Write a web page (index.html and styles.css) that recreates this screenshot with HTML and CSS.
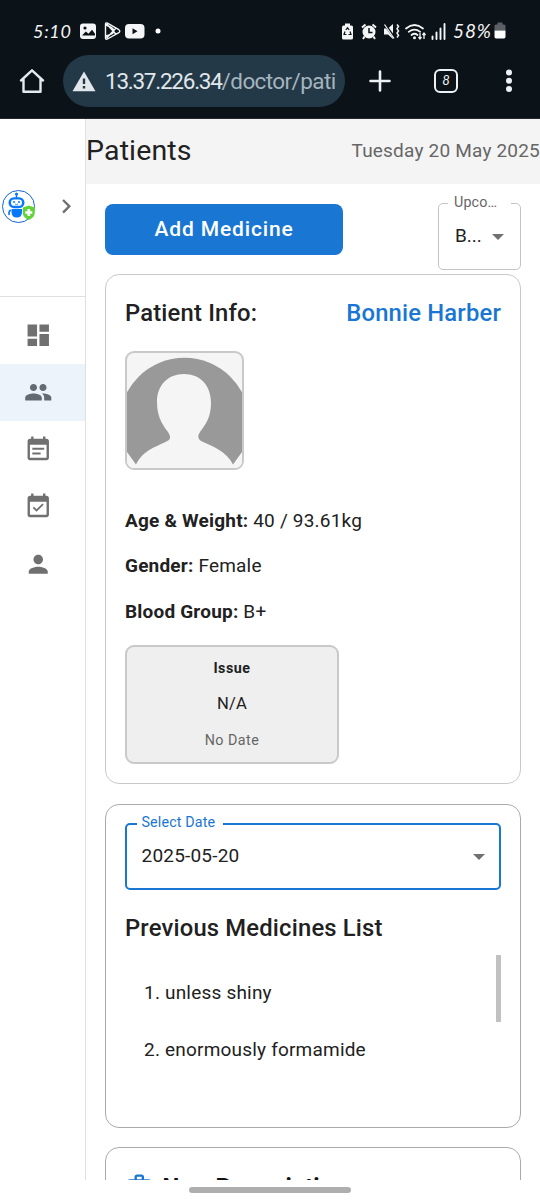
FILE: index.html
```html
<!DOCTYPE html>
<html lang="en">
<head>
<meta charset="utf-8">
<title>Patients</title>
<link rel="stylesheet" href="styles.css">
</head>
<body>
<div class="phone">
  <div class="browser">
    <div class="status">
      <span class="time">5:10</span>
      <svg class="status-left" width="86" height="20" viewBox="0 0 86 20">
        <rect x="0" y="2.500" width="16" height="15.500" rx="3" fill="#f3f5f6"/>
        <circle cx="5" cy="7" r="1.600" fill="#0b1218"/>
        <path d="M2 14.500l3.800-4 2.700 2.300 3.500-4 3 4v1.700z" fill="#0b1218"/>
        <path d="M25.500 3.200v13.600q0 2.300 2 1.200l11.300-6.300q2-1.500 0-3L27.500 2.200q-2-1-2 1zM26.500 2.800l9.500 10.500M26.500 17.300L36 7M26 15q8-2 8-5t-8-6" fill="none" stroke="#f3f5f6" stroke-width="1.400"/>
        <rect x="45" y="3" width="19.500" height="14.500" rx="4" fill="#f3f5f6"/>
        <path d="M52.500 7.200v6l5-3z" fill="#0b1218"/>
        <circle cx="78" cy="10" r="2.500" fill="#fff"/>
      </svg>
      <svg class="status-right" width="108" height="20" viewBox="0 0 108 20">
        <path d="M4 2.500h5v2h1.500q1.500 0 1.500 1.500v11q0 1.500-1.500 1.500h-8Q1 18.500 1 17V6q0-1.500 1.500-1.500H4z" fill="#f3f5f6"/>
        <path d="M4.800 9l1.700-2.200L8.200 9M9 10.500l1 3H7.500M5.500 13.500H3l1-3" fill="none" stroke="#0b1218" stroke-width="1.200"/>
        <circle cx="28" cy="11" r="6.500" fill="#f3f5f6"/>
        <path d="M21 6.500l3.500-3M31.500 3.500l3.500 3M23.500 15.500l-1.500 2.500M32.500 15.500l1.500 2.500" stroke="#f3f5f6" stroke-width="2"/>
        <path d="M28 7v4.500H31.500" fill="none" stroke="#0b1218" stroke-width="1.500"/>
        <path d="M43 7.500h4L52 3v15l-5-4.500h-4z" fill="#f3f5f6"/>
        <path d="M43.500 3L54 17.500" stroke="#0b1218" stroke-width="2.600"/>
        <path d="M43.500 3.500L53 17.500" stroke="#f3f5f6" stroke-width="1.300"/>
        <path d="M56 3.500l1.500 2-1.500 2.200 1.500 2.200-1.500 2.200 1.500 2.200-1.500 2.200" fill="none" stroke="#f3f5f6" stroke-width="1.500"/>
        <path d="M65 7.500Q73.500.5 82 7.500M67.700 10.800q5.800-4.500 11.500 0M70.500 14q3-2.500 6 0" fill="none" stroke="#f3f5f6" stroke-width="1.700" stroke-linecap="round"/>
        <circle cx="73.500" cy="16.800" r="1.500" fill="#f3f5f6"/>
        <path d="M79 12v6M77.500 16l1.500 2 1.500-2M83 18v-6M81.500 14l1.500-2 1.500 2" fill="none" stroke="#f3f5f6" stroke-width="1.300"/>
        <path d="M91.500 15.500v2.500M95.500 11.500V18M99.500 7.500V18M103.500 3V18" stroke="#f3f5f6" stroke-width="1.900" stroke-linecap="round"/>
      </svg>
      <span class="percent">58%</span>
      <svg class="battery" width="12" height="18" viewBox="0 0 12 18">
        <path d="M3.500 0.500h5v2h1.500q1.500 0 1.500 1.500v4.500H.5V4Q.5 2.500 2 2.500h1.500z" fill="#5c5f65"/>
        <path d="M.5 8.500h11v6q0 2-1.500 2H2q-1.500 0-1.500-2z" fill="#fff"/>
      </svg>
    </div>
    <div class="toolbar">
      <svg class="home" width="26" height="26" viewBox="0 0 26 26"><path d="M2 12.500L13 2.300l11 10.200M4.500 11v12.700h17V11" fill="none" stroke="#e6eaed" stroke-width="2.400" stroke-linejoin="round" stroke-linecap="round"/></svg>
      <div class="address">
        <svg width="24" height="21" viewBox="0 0 24 21"><path d="M12 0.500L23.500 20.300H.5z" fill="#e1e7eb"/><path d="M12 7.500v5.500M12 15v2.600" stroke="#233947" stroke-width="2.400"/></svg>
        <span class="url"><span class="host">13.37.226.34</span>/doctor/pati</span>
      </div>
      <svg class="plus" width="22" height="22" viewBox="0 0 22 22"><path d="M11 1.500v19M1.500 11h19" stroke="#eef1f3" stroke-width="2.600" stroke-linecap="round"/></svg>
      <span class="tabs">8</span>
      <svg class="dots" width="8" height="24" viewBox="0 0 8 24" fill="#eef1f3"><circle cx="4" cy="3.500" r="3"/><circle cx="4" cy="11.800" r="3"/><circle cx="4" cy="20" r="3"/></svg>
    </div>
  </div>

  <div class="app">
    <nav class="sidebar">
      <div class="brand">
        <svg class="logo" width="35" height="35" viewBox="0 0 35 35">
          <circle cx="16.500" cy="17.500" r="16" fill="#fff" stroke="#1464d8" stroke-width="1"/>
          <path d="M14.500 5v4" stroke="#0878f8" stroke-width="1.500"/><circle cx="14.500" cy="5" r="1.500" fill="#0878f8"/>
          <rect x="6.500" y="8.200" width="16" height="11" rx="5.500" fill="#0878f8"/>
          <rect x="9" y="10.500" width="11" height="6.300" rx="3.100" fill="#fff"/>
          <circle cx="12" cy="13" r="1" fill="#0878f8"/><circle cx="17" cy="13" r="1" fill="#0878f8"/>
          <path d="M13 15q1.500 1 3 0" stroke="#0878f8" stroke-width=".8" fill="none"/>
          <path d="M9.500 20h10.500v3q0 5.500-5.200 5.500T9.500 23z" fill="#0878f8"/>
          <path d="M8.700 21q-2.500 1.500-1.500 5" fill="none" stroke="#0878f8" stroke-width="1.600"/>
          <path d="M26.800 16.500l6 2v5q0 5-6 7.500-6-2.500-6-7.500v-5z" fill="#62d33a"/>
          <path d="M26.800 20v7M23.300 23.500h7" stroke="#fff" stroke-width="2.700"/>
        </svg>
        <svg class="chevron" width="28.500" height="28.500" viewBox="0 0 24 24"><path d="M10 6L8.590 7.410 13.170 12l-4.580 4.590L10 18l6-6z" fill="#707070"/></svg>
      </div>
      <div class="nav-item"><svg viewBox="0 0 24 24"><path d="M3 13h8V3H3v10zm0 8h8v-6H3v6zm10 0h8V11h-8v10zm0-18v6h8V3h-8z"/></svg></div>
      <div class="nav-item active"><svg viewBox="0 0 24 24"><path d="M16 11c1.660 0 2.990-1.340 2.990-3S17.660 5 16 5s-3 1.340-3 3 1.340 3 3 3zm-8 0c1.660 0 2.990-1.340 2.990-3S9.660 5 8 5 5 6.340 5 8s1.340 3 3 3zm0 2c-2.330 0-7 1.170-7 3.500V19h14v-2.500c0-2.330-4.670-3.500-7-3.500zm8 0c-.29 0-.62.020-.97.050 1.160.84 1.970 1.970 1.970 3.450V19h6v-2.500c0-2.330-4.670-3.500-7-3.500z"/></svg></div>
      <div class="nav-item calendar"><svg viewBox="0 0 24 24"><path d="M19 4h-1V2h-2v2H8V2H6v2H5c-1.110 0-1.990.9-1.990 2L3 20c0 1.100.89 2 2 2h14c1.100 0 2-.9 2-2V6c0-1.100-.9-2-2-2zm0 16H5V9h14v11zM17 11.500H7v1.700h10v-1.700zm-3 4H7v1.700h7v-1.700z"/></svg></div>
      <div class="nav-item calendar"><svg viewBox="0 0 24 24"><path d="M19 4h-1V2h-2v2H8V2H6v2H5c-1.110 0-1.990.9-1.990 2L3 20c0 1.100.89 2 2 2h14c1.100 0 2-.9 2-2V6c0-1.100-.9-2-2-2zm0 16H5V9h14v11zM10.560 17.500l6-6-1.060-1.060-4.940 4.940-2.120-2.120-1.060 1.060z"/></svg></div>
      <div class="nav-item"><svg viewBox="0 0 24 24"><path d="M12 12c2.210 0 4-1.790 4-4s-1.790-4-4-4-4 1.790-4 4 1.790 4 4 4zm0 2c-2.670 0-8 1.340-8 4v2h16v-2c0-2.660-5.330-4-8-4z"/></svg></div>
    </nav>

    <main class="content">
      <header class="page-header"><h1>Patients</h1><span class="today">Tuesday 20 May 2025</span></header>
      <div class="actions">
        <button class="add">Add Medicine</button>
        <fieldset class="select upcoming"><legend>Upco…</legend><span>B...</span><i class="arrow"></i></fieldset>
      </div>

      <section class="card patient">
        <div class="card-title"><span>Patient Info:</span><span class="name">Bonnie Harber</span></div>
        <svg class="avatar" viewBox="0 0 115 115">
          <circle cx="57.500" cy="70" r="65.200" fill="#999"/>
          <path d="M9 111.500C17 96 30 94 42 87Q44.500 84 41 79C34 70 30 62 30 49C30 32 41 21 57 21S84 32 84 50C84 64 79 71 73 79Q69 85 74 88C87 94 99 98 106 111.500L108 115H7z" fill="#f5f5f5"/>
          <path d="M0 99l9 12.500 2 3.500H0zM115 99l-9 12.500-2 3.500h11z" fill="#f5f5f5"/>
        </svg>
        <p class="fact"><b>Age &amp; Weight:</b> 40 / 93.61kg</p>
        <p class="fact"><b>Gender:</b> Female</p>
        <p class="fact"><b>Blood Group:</b> B+</p>
        <div class="issue"><b>Issue</b><span class="value">N/A</span><span class="date">No Date</span></div>
      </section>

      <section class="card medicines">
        <fieldset class="select date-select"><legend>Select Date</legend><span>2025-05-20</span><i class="arrow"></i></fieldset>
        <h2>Previous Medicines List</h2>
        <div class="list">
          <div class="items"><p>1. unless shiny</p><p>2. enormously formamide</p></div>
          <div class="thumb"></div>
        </div>
      </section>

      <section class="card prescription">
        <svg width="28.500" height="28.500" viewBox="0 0 24 24" fill="#1976d2"><path d="M20 6h-4V4c0-1.110-.89-2-2-2h-4c-1.110 0-2 .89-2 2v2H4c-1.110 0-2 .89-2 2v12c0 1.110.89 2 2 2h16c1.110 0 2-.89 2-2V8c0-1.110-.89-2-2-2zM10 4h4v2h-4V4zm10 16H4V8h16v12z"/><path d="M11 10h2v3h3v2h-3v3h-2v-3H8v-2h3z"/></svg>
        <span>New Prescription</span>
      </section>
    </main>
  </div>
  <div class="gesture"><div class="handle"></div></div>
</div>
</body>
</html>
```
FILE: styles.css
```css
* { box-sizing: border-box; }
body { margin: 0; font-family: Roboto, sans-serif; color: #212121; background: #fff; }
h1, h2, p { margin: 0; font-weight: 400; }
svg { display: block; flex: none; }
.phone { width: 540px; height: 1200px; display: flex; flex-direction: column; overflow: hidden; }

.browser { height: 119px; flex: none; background: #0b1218; border-bottom: 1px solid #25282c; color: #f3f5f6; }
.status { height: 54px; padding: 8px 0 0 33px; display: flex; align-items: center; }
.time { width: 47px; font: italic 400 18px/20px Lato, sans-serif; letter-spacing: 0.700px; white-space: nowrap; }
.status-right { margin-left: 175px; }
.percent { width: 46px; padding-left: 4px; font: italic 400 19px/20px Lato, sans-serif; letter-spacing: 0.900px; white-space: nowrap; }
.battery { margin-left: -1px; }
.toolbar { height: 54px; display: flex; align-items: center; padding-left: 19px; }
.address { width: 282px; height: 52px; margin-left: 18px; padding-left: 9px; display: flex; align-items: center; gap: 9px; border-radius: 26px; background: #233947; }
.url { font-size: 22.500px; letter-spacing: -0.600px; color: #a5b4be; white-space: nowrap; }
.host { letter-spacing: -1.250px; color: #e1e7eb; }
.plus { margin-left: 24px; }
.tabs { width: 24px; height: 24px; margin-left: 43px; border: 2.500px solid #eef1f3; border-radius: 6px; font: italic 400 13px/19px Lato, sans-serif; text-align: center; }
.dots { margin-left: 47px; }

.app { height: 1061px; flex: none; display: flex; overflow: hidden; }
.sidebar { width: 86px; flex: none; border-right: 1px solid #e0e0e0; }
.brand { height: 178px; margin-bottom: 10px; padding: 0 5px 3px 2px; display: flex; align-items: center; justify-content: space-between; border-bottom: 1px solid #e0e0e0; }
.nav-item { height: 57.200px; padding-left: 24px; display: flex; align-items: center; }
.nav-item svg { width: 28.500px; height: 28.500px; fill: #707070; }
.nav-item.active { background: #ecf3fb; }
.nav-item.active svg { fill: #646a70; }
.nav-item.active, .nav-item.calendar { padding-bottom: 2px; }
.nav-item.calendar { padding-bottom: 4px; }

.content { flex: 1; min-width: 0; }
.page-header { height: 65px; padding-bottom: 2px; display: flex; justify-content: space-between; align-items: center; background: #f4f4f4; }
h1 { font-size: 28.500px; line-height: 38px; letter-spacing: 0.150px; }
.today { font-size: 19px; letter-spacing: 0.200px; color: #666; white-space: nowrap; }
.actions { height: 90px; padding: 19.500px 19px 0; display: flex; justify-content: space-between; align-items: flex-start; }
.add { width: 238px; height: 51.500px; border: 0; border-radius: 8px; background: #1976d2; color: #fff; font: 500 21px Roboto, sans-serif; letter-spacing: 0.850px; }
.select { position: relative; min-width: 0; margin: 0; padding: 0 16px 0 15px; border: 1px solid #c4c4c4; border-radius: 5px; font-size: 19px; display: flex; justify-content: space-between; }
.select legend { height: 14px; margin-left: -5px; padding: 0 8px 0 5px; font-size: 14.300px; line-height: 11px; letter-spacing: 0.130px; color: #666; white-space: nowrap; }
.select span { line-height: 50px; letter-spacing: 0; }
.arrow { width: 0; height: 0; margin-top: 23px; border: 6px solid transparent; border-top-color: #707070; border-bottom: 0; }
.upcoming { width: 83px; height: 73px; margin-top: -7px; padding-left: 16px; }
.upcoming legend { width: 63px; margin-left: -7px; margin-right: -10px; padding: 0 0 0 6px; }

.card { margin: 0 19px 20px; padding: 19px; border: 1px solid #c9c9c9; border-radius: 14px; }
.patient { height: 510px; padding-top: 24px; }
.card-title { display: flex; justify-content: space-between; font-size: 23.800px; line-height: 28px; font-weight: 500; letter-spacing: 0.180px; }
.name { color: #1976d2; }
.avatar { width: 119px; height: 119px; margin: 24px 0 34px; border: 2px solid #c9c9c9; border-radius: 9px; background: #f5f5f5; }
.fact { height: 45.300px; line-height: 34px; font-size: 19px; letter-spacing: 0.200px; }
.issue { width: 214px; height: 119px; margin-top: 5px; padding-top: 11.500px; display: flex; flex-direction: column; align-items: center; gap: 15.800px; border: 2px solid #c9c9c9; border-radius: 9px; background: #efefef; line-height: 20px; }
.issue b { font-size: 14.300px; letter-spacing: 0.500px; }
.value { font-size: 16.600px; letter-spacing: 0.200px; }
.date { font-size: 14.300px; letter-spacing: 0.480px; color: #666; }

.medicines { height: 324px; margin-bottom: 19px; border-color: #aaa; padding-top: 12px; }
.date-select { height: 73px; border: 2px solid #1976d2; padding: 0 14.500px; }
.date-select legend { color: #1976d2; }
.date-select span { letter-spacing: 0.200px; }
h2 { margin-top: 24px; font-size: 23.800px; line-height: 28px; font-weight: 500; letter-spacing: 0.180px; }
.list { margin-top: 13px; display: flex; justify-content: space-between; }
.items { padding: 19px 0 0 19px; font-size: 19px; line-height: 38px; letter-spacing: 0.200px; }
.items p + p { margin-top: 19px; }
.thumb { width: 5px; height: 67px; background: #c1c1c1; }
.prescription { height: 300px; padding: 24px 19px; border-color: #aaa; display: flex; align-items: flex-start; gap: 9px; font-size: 23.800px; line-height: 31px; font-weight: 700; color: #111; }
.gesture { flex: 1; padding-top: 7px; }
.handle { width: 162px; height: 6px; margin-left: 189px; border-radius: 3px; background: #aeaeae; }
```
